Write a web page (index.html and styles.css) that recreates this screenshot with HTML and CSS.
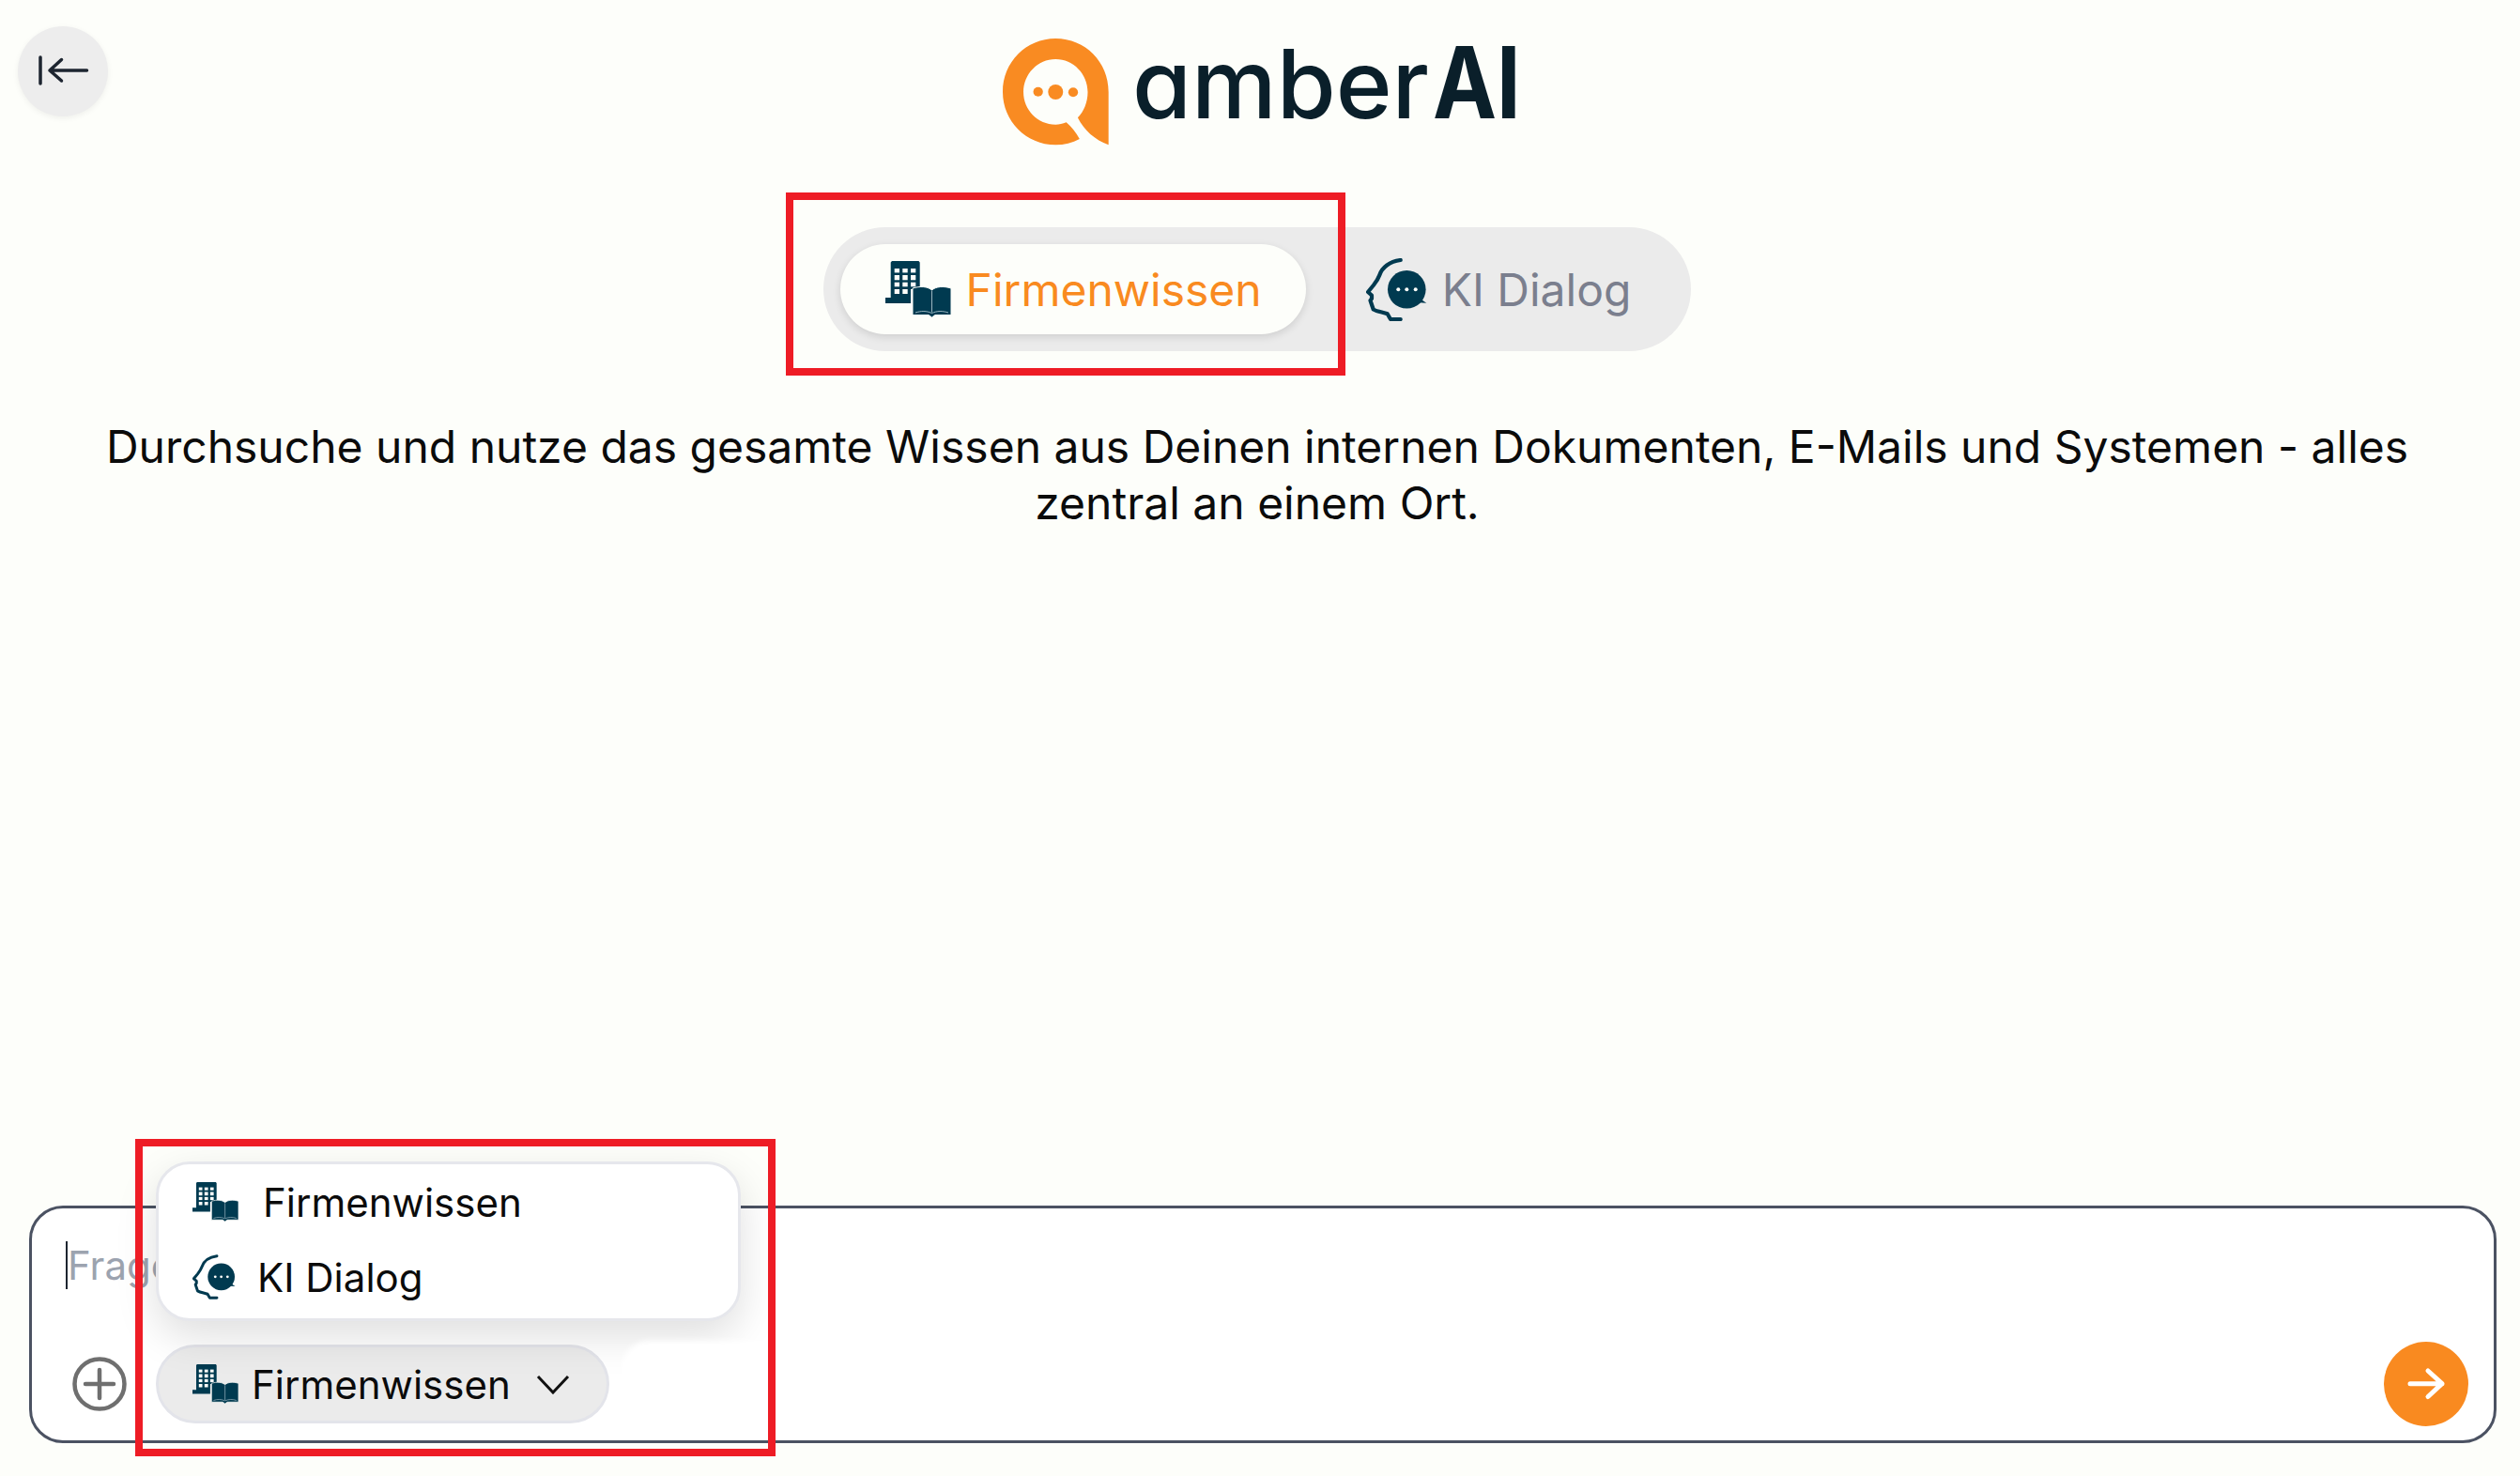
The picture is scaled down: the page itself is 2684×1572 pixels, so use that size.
FILE: index.html
```html
<!DOCTYPE html>
<html lang="de">
<head>
  <meta charset="UTF-8" />
  <title>amberAI</title>
  <link rel="stylesheet" href="styles.css">
</head>
<body>
  <svg class="defs" width="0" height="0">
    <symbol id="icon-wissen" viewBox="0 0 70 60">
      <path fill="#003a50" d="M5.700 1.500 7 0H35.500L36.700 1.500V30H27V39H27V45H0V39H5.700Z" />
      <g fill="#fdfefa">
        <rect x="9.700" y="8" width="5.300" height="4.400" />
        <rect x="18.300" y="8" width="5.400" height="4.400" />
        <rect x="27" y="8" width="5.300" height="4.400" />
        <rect x="9.700" y="15" width="5.300" height="5.300" />
        <rect x="18.300" y="15" width="5.400" height="5.300" />
        <rect x="27" y="15" width="5.300" height="5.300" />
        <rect x="9.700" y="22.700" width="5.300" height="4.600" />
        <rect x="18.300" y="22.700" width="5.400" height="4.600" />
        <rect x="27" y="22.700" width="5.300" height="4.600" />
        <rect x="9.700" y="30" width="5.300" height="5" />
        <rect x="18.300" y="30" width="5.400" height="5" />
      </g>
      <path fill="#003a50" stroke="#fdfefa" stroke-width="1" d="M29 29C37 26.500 45 27 49.500 31C54 27 62 26.500 70 29V57.500H53L49.500 60L46 57.500H29Z" />
      <path fill="none" stroke="#9db5c0" stroke-width="1" d="M49.500 32V54.500M32 55C38 53 44 53 49.500 55.500C55 53 61 53 67 55" />
    </symbol>
    <symbol id="icon-dialog" viewBox="0 0 65 67">
      <path fill="none" stroke="#003a50" stroke-width="4.200" stroke-linecap="round" stroke-linejoin="round" d="M36.700 2C25 3.500 17 10 14.300 18C12.500 23 10 26 7.700 29L2 36L6 39.500V43L4.500 45L6 49.500L7.700 54.500C12 57 18 57.500 22.700 59.300L26 65H36.700" />
      <circle fill="#003a50" cx="43.300" cy="33.300" r="20.300" />
      <path fill="#003a50" d="M56 42L64.300 47.700L52 47Z" />
      <g fill="#fdfefa">
        <circle cx="34.300" cy="33.300" r="2" />
        <circle cx="43.300" cy="33.300" r="2" />
        <circle cx="52.700" cy="33.300" r="2" />
      </g>
    </symbol>
  </svg>

  <div class="page">
    <header class="top">
      <button class="back-btn" aria-label="Seitenleiste einklappen">
        <svg viewBox="0 0 96 96" width="96" height="96">
          <path d="M24 33V61M73.500 47H34M46.500 35.500L34 47L46.500 58" />
        </svg>
      </button>
      <div class="logo">
        <svg class="logo-mark" viewBox="0 0 99 114" width="113" height="114" preserveAspectRatio="none">
          <path fill="#f98b22" d="M49.300 0C77 0 98.700 25 98.700 57V113.300C86 108 76 98 70 84.300C75.500 78 79.300 68 79.300 57C79.300 38 66 22 49.300 22C32.600 22 19.300 38 19.300 57C19.300 76 32.600 91.700 49.300 91.700C52.500 91.700 56 90.700 59.300 89.300C64 94 68.500 100 71.700 107C65 111 57.500 113.300 49.300 113.300C22 113.300 0 88 0 57C0 25 22 0 49.300 0Z" />
          <ellipse fill="#f98b22" cx="33" cy="56.700" rx="4.500" ry="5" />
          <ellipse fill="#f98b22" cx="49.300" cy="57" rx="7" ry="8" />
          <ellipse fill="#f98b22" cx="65.700" cy="57.300" rx="4.500" ry="5" />
        </svg>
        <span class="logo-text">amber<b>AI</b></span>
      </div>
    </header>

    <main class="content">
      <div class="mode-switch">
        <div class="mode-tab active">
          <svg class="icon-wissen"><use href="#icon-wissen" /></svg>
          <span>Firmenwissen</span>
        </div>
        <div class="mode-tab">
          <svg class="icon-dialog"><use href="#icon-dialog" /></svg>
          <span>KI Dialog</span>
        </div>
      </div>
      <p class="description">Durchsuche und nutze das gesamte Wissen aus Deinen internen Dokumenten, E-Mails und Systemen - alles zentral an einem Ort.</p>
    </main>

    <section class="composer">
      <div class="prompt"><span class="placeholder">Frage stellen</span></div>
      <div class="toolbar">
        <svg class="plus" viewBox="0 0 58 58" width="58" height="58">
          <circle cx="29" cy="29" r="26.500" />
          <path d="M14 29H44M29 14V44" />
        </svg>
        <div class="select-wrap">
          <div class="menu">
            <div class="menu-item first">
              <svg class="icon-wissen small"><use href="#icon-wissen" /></svg>
              <span>Firmenwissen</span>
            </div>
            <div class="menu-item">
              <svg class="icon-dialog small"><use href="#icon-dialog" /></svg>
              <span>KI Dialog</span>
            </div>
          </div>
          <div class="select">
            <svg class="icon-wissen small"><use href="#icon-wissen" /></svg>
            <span>Firmenwissen</span>
            <svg class="chevron" viewBox="0 0 36 21" width="36" height="21">
              <path d="M2 2L18 19L34 2" />
            </svg>
          </div>
          <div class="smudge"></div>
        </div>
        <button class="send" aria-label="Senden">
          <svg viewBox="0 0 90 90" width="90" height="90">
            <path d="M28 44.700H62M47 31L62 44.700L47 58.500" />
          </svg>
        </button>
      </div>
    </section>
  </div>

  <!-- Markierungen aus dem Screenshot -->
  <div class="mark mark-tabs"></div>
  <div class="mark mark-select"></div>
</body>
</html>
```

FILE: styles.css
```css
* {
  box-sizing: border-box;
}

body {
  margin: 0;
  background-color: #fdfefa;
  font-family: Inter, "Liberation Sans", sans-serif;
  color: #0b0b0b;
}

.defs {
  position: absolute;
}

.page {
  display: flex;
  flex-direction: column;
  height: 100vh;
  padding: 28px 0 35px 0;
}

.top {
  display: flex;
  align-items: flex-start;
  padding-left: 19px;
  gap: 953px;
}

.back-btn {
  width: 96px;
  height: 96px;
  padding: 0;
  border: none;
  border-radius: 50%;
  background-color: #ededed;
  box-shadow: 0 2px 6px rgba(0, 0, 0, 0.06);
}

.back-btn svg {
  display: block;
}

.back-btn path {
  fill: none;
  stroke: #1d2530;
  stroke-width: 3.5;
  stroke-linecap: round;
  stroke-linejoin: round;
}

.logo {
  display: flex;
  align-items: flex-start;
  gap: 25px;
  margin-top: 13px;
  height: 114px;
}

.logo-text {
  font-size: 102px;
  line-height: 94px;
  font-weight: 500;
  color: #0a1f2a;
  font-feature-settings: "cv11";
}

.logo-text b {
  display: inline-block;
  margin-left: 4px;
  font-size: 106px;
  font-weight: 700;
  transform: scaleX(0.86);
  transform-origin: left;
}

.content {
  flex: 1;
  display: flex;
  flex-direction: column;
  align-items: center;
  padding-right: 6px;
}

.mode-switch {
  display: flex;
  margin-top: 87px;
  padding: 18px;
  border-radius: 66px;
  background-color: #ebebeb;
}

.mode-tab {
  display: flex;
  align-items: center;
  gap: 16px;
  height: 96px;
  padding: 0 46px 0 64px;
  border-radius: 48px;
  font-size: 48px;
  color: #7b7f8e;
}

.mode-tab.active {
  padding: 0 47px 0 48px;
  background-color: #fdfefa;
  color: #f98a20;
  box-shadow: 0 3px 8px rgba(0, 0, 0, 0.12);
}

.icon-wissen {
  width: 70px;
  height: 60px;
  flex: none;
}

.icon-dialog {
  width: 65px;
  height: 67px;
  flex: none;
}

.icon-wissen.small {
  width: 49px;
  height: 42px;
}

.icon-dialog.small {
  width: 46px;
  height: 48px;
}

.description {
  width: 100%;
  margin: 72px 0 0 0;
  padding: 0 100px;
  font-size: 48px;
  line-height: 60px;
  text-align: center;
}

.composer {
  display: flex;
  flex-direction: column;
  height: 253px;
  margin: 0 25px 0 31px;
  padding: 35px 27px 15px 43px;
  border: 3px solid #4b5262;
  border-radius: 36px;
  background-color: #ffffff;
}

.prompt {
  flex: 1;
  margin-left: -7px;
}

.placeholder {
  display: inline-block;
  height: 51px;
  border-left: 2px solid #1d2530;
  font-size: 42px;
  line-height: 51px;
  color: #9ca3af;
}

.toolbar {
  display: flex;
  align-items: center;
}

.plus {
  margin-right: 31px;
  flex: none;
}

.plus circle,
.plus path {
  fill: none;
  stroke: #6f6f6f;
  stroke-width: 4.5;
  stroke-linecap: round;
}

.select-wrap {
  position: relative;
  flex: 1;
}

.select {
  display: inline-flex;
  align-items: center;
  width: 483px;
  height: 84px;
  padding-left: 36px;
  border: 3px solid #e3e4ea;
  border-radius: 42px;
  background-color: #ebebeb;
  font-size: 42px;
}

.select span {
  margin-left: 14px;
}

.chevron {
  margin-left: 27px;
}

.chevron path {
  fill: none;
  stroke: #111111;
  stroke-width: 3;
}

.menu {
  position: absolute;
  left: 0;
  bottom: 109px;
  z-index: 2;
  display: flex;
  flex-direction: column;
  width: 623px;
  height: 170px;
  padding: 0 36px 4px 36px;
  border: 3px solid #e6e7ec;
  border-radius: 36px;
  background-color: #ffffff;
  box-shadow: 0 16px 44px rgba(0, 0, 0, 0.13);
  font-size: 42px;
}

.menu-item {
  display: flex;
  align-items: center;
  flex: 1;
  gap: 23px;
}

.menu-item.first {
  gap: 26px;
}

.smudge {
  position: absolute;
  left: 496px;
  top: -4px;
  z-index: 3;
  width: 170px;
  height: 44px;
  border-radius: 30px 0 0 0;
  background-color: #ffffff;
  filter: blur(3px);
}

.send {
  width: 90px;
  height: 90px;
  padding: 0;
  border: none;
  border-radius: 50%;
  background-color: #f98a20;
  flex: none;
}

.send svg {
  display: block;
}

.send path {
  fill: none;
  stroke: #ffffff;
  stroke-width: 5;
  stroke-linecap: round;
  stroke-linejoin: round;
}

.mark {
  position: absolute;
  z-index: 5;
  border: 8px solid #ee1c25;
}

.mark-tabs {
  left: 837px;
  top: 205px;
  width: 596px;
  height: 195px;
}

.mark-select {
  left: 144px;
  top: 1213px;
  width: 682px;
  height: 338px;
}
```
